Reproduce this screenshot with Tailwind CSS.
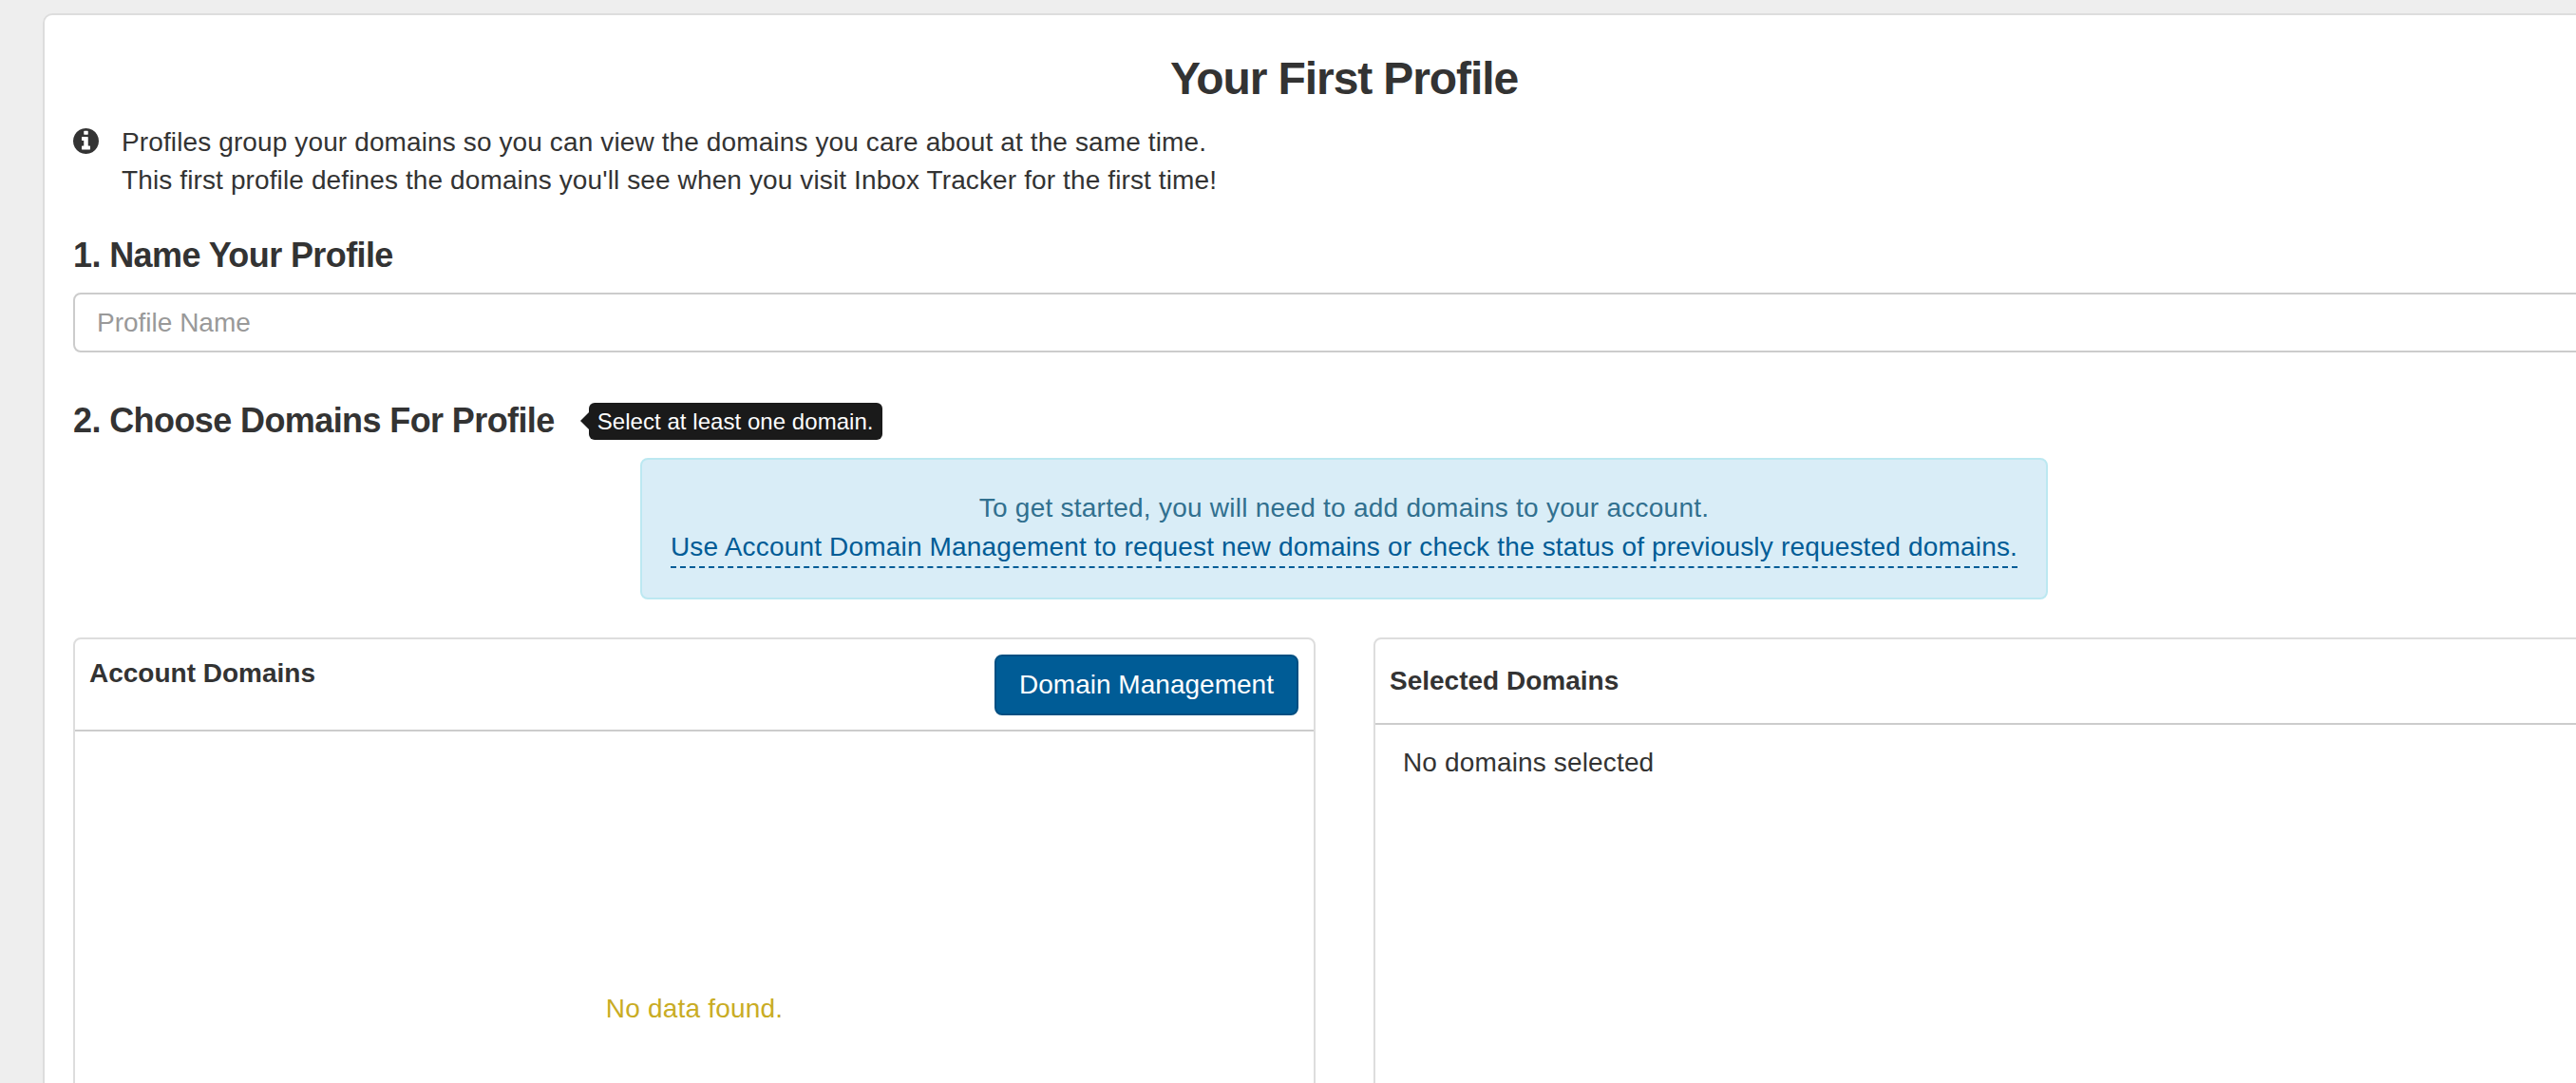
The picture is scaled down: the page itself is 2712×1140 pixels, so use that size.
<!DOCTYPE html>
<html lang="en">
<head>
    <meta charset="UTF-8">
    <meta name="viewport" content="width=device-width, initial-scale=1.0">
    <title>Your First Profile</title>
    <script src="https://cdn.jsdelivr.net/npm/@tailwindcss/browser@4"></script>
</head>
<body class="bg-[#eeeeee] h-[1140px] overflow-hidden font-['Liberation_Sans',Arial,sans-serif] text-[28px] leading-[40px] text-[#333333]">

    <div class="mt-[14px] ml-[45px] w-[2740px] h-[1200px] bg-white border-2 border-[#dddddd] rounded-[10px] px-[30px]">
        <h2 class="mt-[34px] text-center text-[48px] leading-[66px] font-bold tracking-[-1.1px]">Your First Profile</h2>

        <div class="mt-[14px] flex">
            <svg class="w-[27px] h-[27px] mt-[5px] shrink-0 text-[#333333]" viewBox="128 128 1536 1536" fill="currentColor">
                <path fill-rule="evenodd" d="M1152 1376v-160q0-14-9-23t-23-9h-96v-512q0-14-9-23t-23-9h-320q-14 0-23 9t-9 23v160q0 14 9 23t23 9h96v320h-96q-14 0-23 9t-9 23v160q0 14 9 23t23 9h448q14 0 23-9t9-23zm-128-896v-160q0-14-9-23t-23-9h-192q-14 0-23 9t-9 23v160q0 14 9 23t23 9h192q14 0 23-9t9-23zm640 416q0 209-103 385.5t-279.5 279.5-385.5 103-385.5-103-279.5-279.5-103-385.5 103-385.5 279.5-279.5 385.5-103 385.5 103 279.5 279.5 103 385.5z"/>
            </svg>
            <div class="ml-[24px] tracking-[0.12px]">
                <p>Profiles group your domains so you can view the domains you care about at the same time.</p>
                <p>This first profile defines the domains you'll see when you visit Inbox Tracker for the first time!</p>
            </div>
        </div>

        <h4 class="mt-[39px] text-[36px] leading-[40px] font-bold tracking-[-0.6px]">1. Name Your Profile</h4>
        <input type="text" placeholder="Profile Name" class="mt-[19px] block w-full h-[63px] px-[23px] border-2 border-[#cccccc] rounded-[8px] placeholder:text-[#999999]">

        <div class="mt-[52px] flex items-center">
            <h4 class="text-[36px] leading-[40px] font-bold tracking-[-0.6px]">2. Choose Domains For Profile</h4>
            <div class="relative ml-[36px] h-[39px] px-[9px] bg-[#1a1a1a] text-white text-[24px] leading-[39px] tracking-[0.05px] rounded-[6px]">
                <span class="absolute left-[-9px] top-[10px] w-0 h-0 border-y-[9px] border-y-transparent border-r-[9px] border-r-[#1a1a1a]"></span>
                Select at least one domain.
            </div>
        </div>

        <div class="mt-[19px] mx-auto w-[1482px] h-[149px] pt-[31px] bg-[#d9edf7] border-2 border-[#bce8f1] rounded-[8px] text-center text-[#31708f]">
            <p class="tracking-[0.25px]">To get started, you will need to add domains to your account.</p>
            <a class="inline-block mt-[1px] border-b-2 border-dashed border-[#005c96] text-[#005c96] tracking-[0.18px]">Use Account Domain Management to request new domains or check the status of previously requested domains.</a>
        </div>

        <div class="mt-[40px] grid grid-cols-[1308px_1307px] gap-x-[61px]">
            <div class="h-[700px] border-2 border-[#dddddd] rounded-[8px]">
                <div class="h-[97px] flex justify-between items-start pt-[16px] pl-[15px] pr-[16px] border-b-2 border-[#cccccc]">
                    <span class="font-bold">Account Domains</span>
                    <button class="h-[64px] px-[24px] bg-[#005c96] border-2 border-[#004f82] rounded-[8px] text-white tracking-[0.02px]">Domain Management</button>
                </div>
                <p class="pt-[272px] text-center text-[#c9ac24] tracking-[0.2px]">No data found.</p>
            </div>
            <div class="h-[700px] border-2 border-[#dddddd] rounded-[8px]">
                <div class="h-[90px] pt-[24px] pl-[15px] border-b-2 border-[#cccccc] font-bold">Selected Domains</div>
                <p class="pt-[20px] pl-[29px] tracking-[0.15px]">No domains selected</p>
            </div>
        </div>
    </div>

</body>
</html>
